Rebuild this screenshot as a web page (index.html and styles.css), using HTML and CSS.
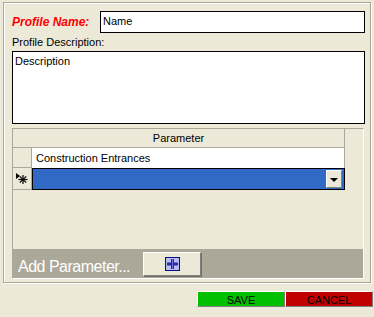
FILE: index.html
```html
<!DOCTYPE html>
<html lang="en">
<head>
  <meta charset="UTF-8" />
  <title>Profile</title>
  <link rel="stylesheet" href="styles.css">
</head>
<body>
  <div class="profile-box">
    <div class="name-row">
      <label class="name-label" for="profileName">Profile Name:</label>
      <input type="text" id="profileName" class="name-input" value="Name" />
    </div>
    <div class="label">Profile Description:</div>
    <textarea class="desc-input">Description</textarea>

    <div class="grid">
      <div class="grid-header">Parameter</div>
      <div class="grid-row">
        <div class="row-head"></div>
        <div class="cell">Construction Entrances</div>
      </div>
      <div class="grid-row new-row">
        <div class="row-head">
          <svg class="new-mark" width="12" height="11" viewBox="0 0 12 11">
            <polygon points="0,0 0,6 4,3" fill="#000"/>
            <g stroke="#000" stroke-width="1.2">
              <line x1="7" y1="2" x2="7" y2="11"/>
              <line x1="2.5" y1="6.5" x2="11.5" y2="6.5"/>
              <line x1="3.8" y1="3.3" x2="10.2" y2="9.7"/>
              <line x1="10.2" y1="3.3" x2="3.8" y2="9.7"/>
            </g>
          </svg>
        </div>
        <div class="cell selected">
          <span class="drop-btn"><span class="drop-arrow"></span></span>
        </div>
      </div>
      <div class="grid-fill"></div>
      <div class="grid-toolbar">
        <span class="add-label">Add Parameter...</span>
        <button class="add-btn">
          <svg width="15" height="14" viewBox="0 0 15 14">
            <rect x="0.5" y="0.5" width="14" height="13" fill="#b9bcf2" stroke="#0b0b8e"/>
            <rect x="6" y="2" width="3" height="10" fill="#2d2d9e"/>
            <rect x="2" y="5.5" width="11" height="3" fill="#2d2d9e"/>
            <rect x="7" y="2" width="1" height="10" fill="#6a6ad8"/>
          </svg>
        </button>
      </div>
    </div>
  </div>

  <div class="actions">
    <button class="btn save">SAVE</button>
    <button class="btn cancel">CANCEL</button>
  </div>
</body>
</html>
```

FILE: styles.css
```css
:root {
  --face: #ece9d8;
  --shade: #aca899;
  --dark: #808080;
  --select: #316ac5;
}

body {
  margin: 0;
  background: var(--face);
  font-family: 'Liberation Sans', Arial, sans-serif;
  font-size: 11px;
  color: #000;
}

.profile-box {
  box-sizing: border-box;
  width: 368px;
  height: 281px;
  margin: 2px 0 0 3px;
  padding: 8px 0 3px 8px;
  border: 1px solid var(--shade);
  box-shadow: inset 1px 1px 0 #fff, 1px 1px 0 #fff;
  display: flex;
  flex-direction: column;
}

.name-row {
  display: flex;
  align-items: center;
  height: 22px;
}

.name-label {
  width: 88px;
  color: #ff0000;
  font-size: 12px;
  font-weight: bold;
  font-style: italic;
}

.name-input,
.desc-input {
  box-sizing: border-box;
  border: 1px solid #000;
  background: #fff;
  font-family: inherit;
  font-size: 11px;
  color: #000;
  outline: none;
  margin: 0;
}

.name-input {
  width: 265px;
  height: 22px;
  padding: 0 2px 3px;
}

.label {
  margin: 3px 0 2px;
  line-height: 13px;
}

.desc-input {
  width: 353px;
  height: 73px;
  padding: 3px 2px;
  line-height: 13px;
  resize: none;
  overflow: hidden;
}

.grid {
  box-sizing: border-box;
  width: 352px;
  height: 151px;
  margin-top: 4px;
  border: 1px solid var(--shade);
  border-right-color: #fff;
  border-bottom-color: #fff;
  display: flex;
  flex-direction: column;
}

.grid-header {
  width: 331px;
  height: 18px;
  line-height: 18px;
  text-align: center;
  border-right: 1px solid var(--shade);
  border-bottom: 1px solid var(--shade);
}

.grid-row {
  display: flex;
  height: 20px;
}

.grid-row.new-row {
  height: 22px;
}

.row-head {
  box-sizing: border-box;
  width: 19px;
  border-right: 1px solid var(--shade);
  border-bottom: 1px solid var(--shade);
}

.new-mark {
  display: block;
  margin: 5px 0 0 3px;
}

.cell {
  box-sizing: border-box;
  width: 313px;
  padding-left: 4px;
  line-height: 20px;
  background: #fff;
  border-right: 1px solid var(--shade);
}

.cell.selected {
  background: var(--select);
  border: 1px solid #000;
  display: flex;
  justify-content: flex-end;
  padding: 1px 2px 0 0;
}

.drop-btn {
  box-sizing: border-box;
  width: 16px;
  height: 18px;
  background: var(--face);
  border: 1px solid;
  border-color: #fff var(--dark) var(--dark) #fff;
  display: flex;
  align-items: center;
  justify-content: center;
}

.drop-arrow {
  width: 0;
  height: 0;
  border-left: 4px solid transparent;
  border-right: 4px solid transparent;
  border-top: 4px solid #000;
  margin-top: 1px;
}

.grid-fill {
  flex: 1;
}

.grid-toolbar {
  height: 29px;
  background: var(--shade);
  display: flex;
  align-items: flex-start;
  padding-left: 5px;
}

.add-label {
  width: 125px;
  padding-top: 9px;
  line-height: 18px;
  font-size: 16px;
  letter-spacing: -0.5px;
  color: #fff;
  white-space: nowrap;
}

.add-btn {
  box-sizing: border-box;
  width: 58px;
  height: 24px;
  margin-top: 3px;
  padding: 0;
  background: var(--face);
  border: 1px solid;
  border-color: #fff var(--dark) var(--dark) #fff;
  box-shadow: 1px 1px 0 #716f64;
  display: flex;
  align-items: center;
  justify-content: center;
}

.add-btn svg {
  display: block;
}

.actions {
  display: flex;
  justify-content: flex-end;
  margin-top: 8px;
  padding-right: 1px;
}

.btn {
  box-sizing: border-box;
  width: 88px;
  height: 16px;
  margin: 0;
  padding: 2px 0 0;
  border: 1px solid;
  border-color: #fff var(--dark) var(--dark) #fff;
  font-family: inherit;
  font-size: 11px;
  line-height: 12px;
  color: #000;
  text-align: center;
}

.btn.save {
  background: #00c000;
}

.btn.cancel {
  background: #c00000;
}
```
